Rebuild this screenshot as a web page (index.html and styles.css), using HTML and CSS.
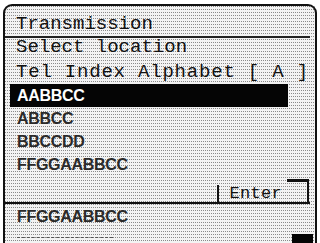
FILE: index.html
```html
<!DOCTYPE html>
<html>
<head>
<meta charset="utf-8">
<link rel="stylesheet" href="styles.css">
</head>
<body>
<div class="screen">
  <div class="upper">
    <div class="title">Transmission</div>
    <div class="rule"></div>
    <div class="line">Select location</div>
    <div class="line tel">Tel Index Alphabet [ A ]</div>
    <ul class="list">
      <li class="item sel">AABBCC</li>
      <li class="item">ABBCC</li>
      <li class="item">BBCCDD</li>
      <li class="item">FFGGAABBCC</li>
    </ul>
    <div class="actions">
      <span class="enter">Enter</span>
      <span class="corner"></span>
    </div>
  </div>
  <div class="lower">
    <div class="item">FFGGAABBCC</div>
    <div class="next"><span class="peek"></span><span class="scroll"></span></div>
  </div>
</div>
</body>
</html>
```

FILE: styles.css
```css
html, body {
  margin: 0;
  padding: 0;
  background: #fff;
}
body {
  width: 320px;
  height: 243px;
  overflow: hidden;
}
.screen {
  margin: 4px 3px 0 3px;
  height: 239px;
  box-sizing: border-box;
  border: 2px solid #111;
  border-bottom: none;
  border-radius: 9px 9px 0 0;
  background-color: #f3f3f3;
  background-image:
    linear-gradient(90deg, transparent 1px, #f3f3f3 1px),
    linear-gradient(#8a8a8a 1px, transparent 1px);
  background-size: 2px 3px;
  overflow: hidden;
  color: #111;
}
.upper {
  border-bottom: 2px solid #111;
  margin-right: 5px;
}
.title, .line, .enter {
  font-family: "Liberation Mono", monospace;
  font-size: 19px;
  white-space: pre;
}
.title {
  padding: 6px 0 0 11px;
  height: 24px;
  line-height: 24px;
}
.rule {
  height: 2px;
  background: #222;
}
.line {
  padding-left: 11px;
  height: 18px;
  line-height: 18px;
}
.line.tel {
  padding-top: 4px;
  height: 24px;
  line-height: 24px;
  letter-spacing: 0.8px;
}
.list {
  list-style: none;
  margin: 0;
  padding: 0;
}
.item {
  font-family: "Liberation Sans", Arial, sans-serif;
  font-weight: bold;
  font-size: 16px;
  letter-spacing: -0.3px;
  height: 23px;
  line-height: 23px;
  padding-left: 12px;
  color: #2a2a2a;
}
.item.sel {
  background: #050505;
  color: #fff;
  margin-left: 5px;
  width: 278px;
  padding-left: 7px;
  box-sizing: border-box;
}
.actions {
  height: 26px;
  display: flex;
  justify-content: flex-end;
  align-items: flex-end;
  padding-right: 1px;
}
.enter {
  border-left: 2px solid #111;
  height: 17px;
  line-height: 17px;
  font-size: 17px;
  letter-spacing: 0.3px;
  padding: 0 5px 0 10px;
}
.corner {
  width: 20px;
  height: 20px;
  border-top: 3px solid #111;
  border-right: 2px solid #111;
}
.lower .item {
  height: 28px;
  line-height: 26px;
}
.next {
  display: flex;
  justify-content: space-between;
  height: 9px;
}
.peek {
  width: 96px;
  margin-left: 12px;
  margin-top: 5px;
  height: 0;
  border-top: 1px dashed #555;
}
.scroll {
  width: 21px;
  height: 9px;
  margin-top: 2px;
  margin-right: 2px;
  background: #050505;
}
```
